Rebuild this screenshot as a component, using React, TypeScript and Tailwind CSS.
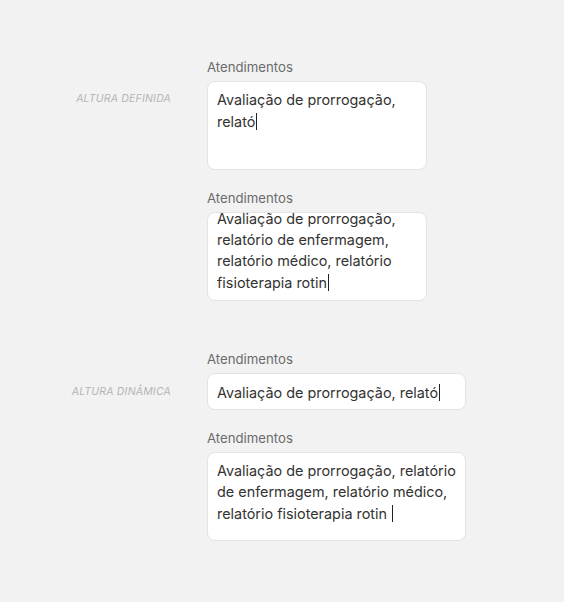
const font = { fontFamily: 'Inter, "Open Sans", sans-serif' };

function Caret() {
  return <span className="ml-[1px] inline-block h-[17px] w-[1px] translate-y-[3px] bg-[#222]" />;
}

function Field({
  width,
  height,
  shift = 0,
  children,
}: {
  width: string;
  height: string;
  shift?: number;
  children: React.ReactNode;
}) {
  return (
    <div>
      <div className="mb-[6px] text-[13.2px] leading-[16px] text-[#6b6b6b]">Atendimentos</div>
      <div
        className={`${width} ${height} overflow-hidden rounded-[8px] border border-[#e3e3e3] bg-white py-[7px] pl-[9px] pr-[4px] text-[14.4px] leading-[21px] text-[#333]`}
      >
        <div style={{ marginTop: -shift }}>{children}</div>
      </div>
    </div>
  );
}

function SideLabel({ text, top }: { text: string; top: string }) {
  return (
    <div className={`w-[171px] shrink-0 text-right text-[10.5px] italic uppercase leading-[14px] tracking-[0.2px] text-[#b5b5b5] ${top}`}>
      {text}
    </div>
  );
}

export default function App() {
  return (
    <div className="min-h-[602px] w-full bg-[#f2f2f2] pt-[59px]" style={font}>
      <div className="flex gap-[36px]">
        <SideLabel text="Altura definida" top="pt-[33px]" />
        <div className="flex flex-col gap-[20px]">
          <Field width="w-[220px]" height="h-[89px]">
            Avaliação de prorrogação, relató
            <Caret />
          </Field>
          <Field width="w-[220px]" height="h-[89px]" shift={12}>
            Avaliação de prorrogação, relatório de enfermagem, relatório médico, relatório fisioterapia rotin
            <Caret />
          </Field>
        </div>
      </div>

      <div className="mt-[50px] flex gap-[36px]">
        <SideLabel text="Altura dinâmica" top="pt-[34px]" />
        <div className="flex flex-col gap-[20px]">
          <Field width="w-[259px]" height="h-[37px]">
            Avaliação de prorrogação, relató
            <Caret />
          </Field>
          <Field width="w-[259px]" height="h-[89px]">
            Avaliação de prorrogação, relatório de enfermagem, relatório médico, relatório fisioterapia rotin{' '}
            <Caret />
          </Field>
        </div>
      </div>
    </div>
  );
}
